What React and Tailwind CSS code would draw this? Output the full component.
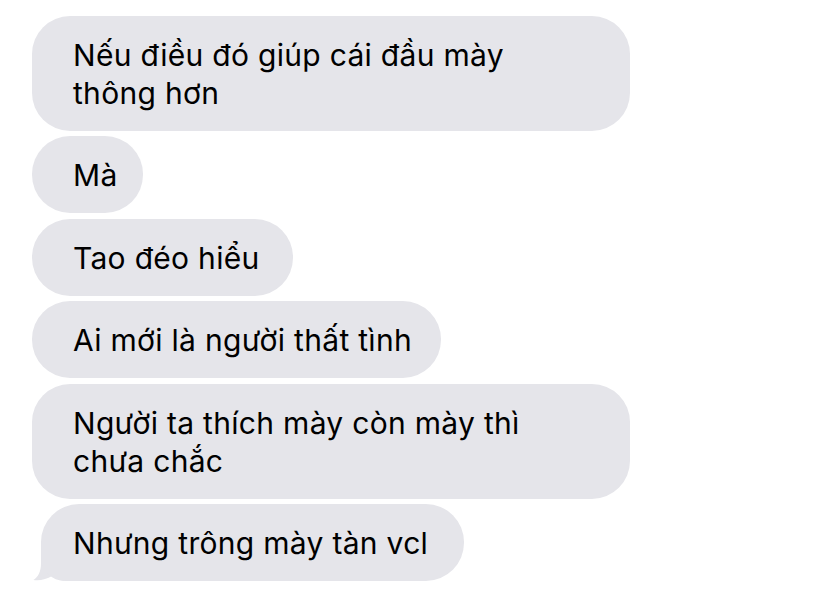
import React from "react";

const Bubble = ({ children, className = "" }) => (
  <div
    className={`bg-[#e5e5ea] text-black rounded-[38px] pl-[41px] pr-[28px] pt-[20px] pb-[19px] text-[30px] leading-[38px] tracking-[0.3px] ${className}`}
  >
    {children}
  </div>
);

const Tail = () => (
  <svg
    className="absolute left-[-9px] bottom-0"
    width="32"
    height="34"
    viewBox="0 0 32 34"
  >
    <path
      d="M9 0 L9 16 C9 25 6 30 1.5 33 C8 34 15 32 20 29 C23 31 27 33 32 34 L32 0 Z"
      fill="#e5e5ea"
    />
  </svg>
);

export default function App() {
  return (
    <div
      className="w-[828px] h-[598px] bg-white overflow-hidden pt-[16px] flex flex-col items-start gap-[5.4px]"
      style={{ fontFamily: "Inter, 'Noto Sans', 'Liberation Sans', sans-serif" }}
    >
      <Bubble className="ml-[32px] w-[598px] h-[115px]">
        Nếu điều đó giúp cái đầu mày
        <br />
        thông hơn
      </Bubble>
      <Bubble className="ml-[32px] w-[111px] h-[77px]">Mà</Bubble>
      <Bubble className="ml-[32px] w-[261px] h-[77px]">Tao đéo hiểu</Bubble>
      <Bubble className="ml-[32px] w-[409px] h-[77px]">
        Ai mới là người thất tình
      </Bubble>
      <Bubble className="ml-[32px] w-[598px] h-[115px]">
        Người ta thích mày còn mày thì
        <br />
        chưa chắc
      </Bubble>
      <div className="relative ml-[41px]">
        <Tail />
        <Bubble className="relative w-[423px] h-[77px] !pl-[32px] rounded-bl-[24px]">
          Nhưng trông mày tàn vcl
        </Bubble>
      </div>
    </div>
  );
}
